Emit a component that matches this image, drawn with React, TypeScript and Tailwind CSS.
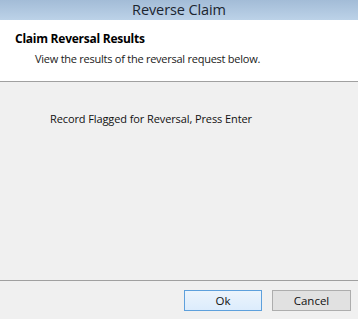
export default function App() {
  return (
    <div
      className="w-[358px] h-[319px] flex flex-col bg-[#f0f0f0] overflow-hidden"
      style={{ fontFamily: '"Open Sans", "Noto Sans", sans-serif' }}
    >
      {/* title bar */}
      <div className="h-[20px] flex items-center justify-center bg-gradient-to-b from-[#a3bcd7] to-[#bcd2e8]">
        <span className="text-[14.5px] leading-none text-[#1b2530] tracking-[-0.1px]">
          Reverse Claim
        </span>
      </div>

      {/* header */}
      <div className="h-[62px] bg-white border-b border-[#a0a0a0] flex flex-col pl-[15px] pt-[10px]">
        <div className="text-[12px] font-bold leading-[18px] text-black tracking-[-0.25px]">
          Claim Reversal Results
        </div>
        <div className="pl-[20px] mt-[3px] text-[11px] leading-[16px] text-[#1a1a1a] tracking-[-0.25px]">
          View the results of the reversal request below.
        </div>
      </div>

      {/* content */}
      <div className="flex-1 pl-[50px] pt-[29px]">
        <div className="text-[11px] leading-[16px] text-[#111] tracking-[-0.1px]">
          Record Flagged for Reversal, Press Enter
        </div>
      </div>

      {/* footer */}
      <div className="h-[39px] border-t border-[#a0a0a0] flex justify-end items-start pt-[9px] pr-[7px] gap-[10px]">
        <button className="w-[78px] h-[21px] border border-[#5ea0dc] bg-gradient-to-b from-[#ecf4fc] to-[#dcecfc] text-[11.5px] leading-none text-[#111]">
          Ok
        </button>
        <button className="w-[79px] h-[21px] border border-[#adadad] bg-[#e1e1e1] text-[11.5px] leading-none text-[#111]">
          Cancel
        </button>
      </div>
    </div>
  );
}
